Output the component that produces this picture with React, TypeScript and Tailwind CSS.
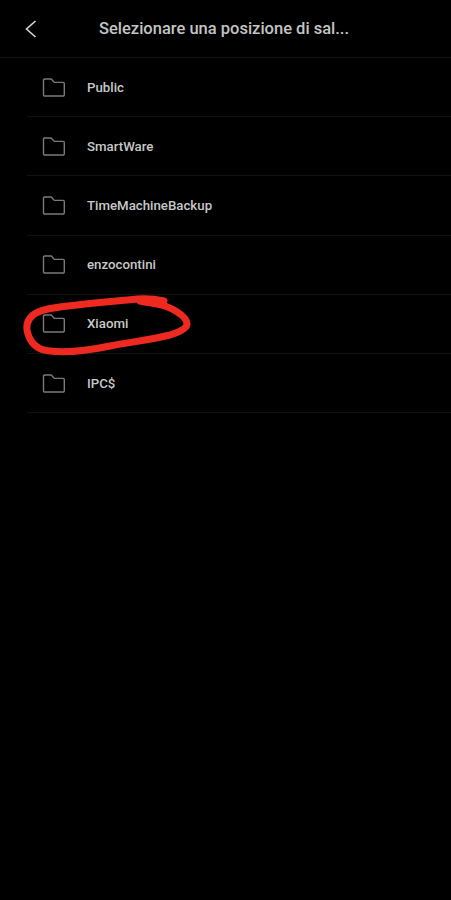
const rows = ["Public", "SmartWare", "TimeMachineBackup", "enzocontini", "Xiaomi", "IPC$"];

function Folder() {
  return (
    <svg width="24" height="19" viewBox="0 0 24 19" fill="none" stroke="#7a7a7a" strokeWidth="1.4" strokeLinejoin="round">
      <path d="M1.5 2.2a1.2 1.2 0 0 1 1.2-1.2h6.6l3 3.4h8.8a1.2 1.2 0 0 1 1.2 1.2v11.2a1.2 1.2 0 0 1-1.2 1.2H2.7a1.2 1.2 0 0 1-1.2-1.2z" />
    </svg>
  );
}

export default function App() {
  return (
    <div className="relative w-[451px] h-[900px] overflow-hidden bg-black font-['Roboto',sans-serif]">
      <header className="relative flex items-center justify-center h-[58px] pr-[3px] pt-px border-b border-[#121212]">
        <button className="absolute left-[24px] top-[19px]">
          <svg width="14" height="20" viewBox="0 0 14 20" fill="none" stroke="#d8d8d8" strokeWidth="1.6" className="block">
            <path d="M11.5 2 L2.5 10 L11.5 18" />
          </svg>
        </button>
        <h1 className="text-[16.5px] font-medium text-[#c4c4c4]">Selezionare una posizione di sal...</h1>
      </header>
      <ul className="pl-[27px]">
        {rows.map((r) => (
          <li key={r} className="flex items-center h-[59.2px] pl-[15px] gap-[21px] border-b border-[#121212]">
            <Folder />
            <span className="pt-px text-[13.25px] font-medium text-[#c8c8c8]">{r}</span>
          </li>
        ))}
      </ul>
      <svg className="absolute left-0 top-0" width="451" height="900" fill="none" stroke="#ee2a20" strokeWidth="7" strokeLinecap="round" strokeLinejoin="round">
        <path d="M164 301 C155 299 148 298 137 299 C118 301 94 303 68 306 C50 308 39 310 33 315 C26 321 26 328 28 334 C31 344 38 350 50 351 C66 353 86 351 110 346 C130 342 150 340 170 335 C180 332 187 328 187 324 C187 318 178 311 165 306 C155 303 148 303 140 301" />
      </svg>
    </div>
  );
}
